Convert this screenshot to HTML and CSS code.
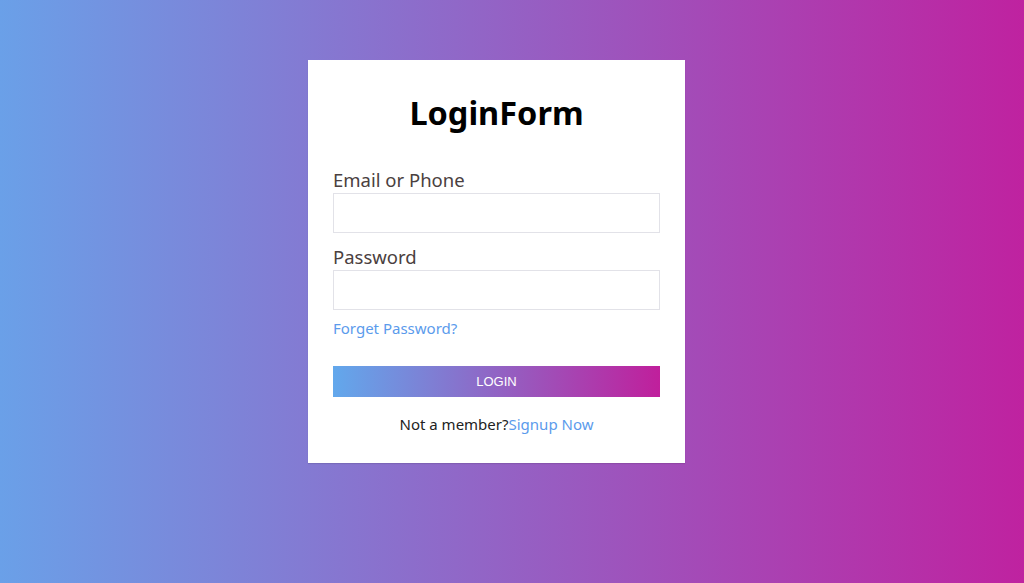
FILE: index.html
```html
<html>
<head>
    <title>Login Form</title>
    <link rel="stylesheet" href="styles.css">
</head>
<body>
    <div class="page">
        <div class="card">
            <h1>LoginForm</h1>
            <form>
                <label for="email">Email or Phone</label>
                <input type="text" id="email" name="email">
                <label for="password">Password</label>
                <input type="password" id="password" name="password">
                <a class="forgot" href="#">Forget Password?</a>
                <button type="submit">LOGIN</button>
            </form>
            <div class="signup">Not a member?<a href="#">Signup Now</a></div>
        </div>
    </div>
</body>
</html>
```
FILE: styles.css
```css
body {
    margin: 0;
    height: 583px;
    background: linear-gradient(to right, #6aa0e8, #bf22a0);
    font-family: "Noto Sans", sans-serif;
}

.page {
    padding-top: 60px;
    padding-left: 308px;
}

.card {
    width: 327px;
    background: white;
    padding: 26px 25px 29px;
    box-shadow: 0 1px 1px rgba(0, 0, 0, 0.1);
}

h1 {
    margin: 5px 0 33px;
    text-align: center;
    font-size: 32.5px;
    font-weight: 700;
    line-height: 44px;
    color: #000;
}

form {
    display: flex;
    flex-direction: column;
}

label {
    font-size: 18.5px;
    line-height: 24px;
    color: #4a4040;
    margin-bottom: 1px;
}

input + label {
    margin-top: 2px;
}

input {
    height: 40px;
    border: 1px solid #e2e2e8;
    padding: 0 10px;
    font-size: 16px;
    margin-bottom: 10px;
    box-sizing: border-box;
}

.forgot {
    font-size: 15px;
    line-height: 16px;
    color: #5b9bec;
    text-decoration: none;
    margin-bottom: 30px;
}

button {
    height: 31px;
    border: none;
    color: white;
    font-family: "Liberation Sans", Arial, sans-serif;
    font-size: 13px;
    background: linear-gradient(to right, #62a8ec, #c01f9c);
    cursor: pointer;
}

.signup {
    margin-top: 17px;
    text-align: center;
    font-size: 15px;
    line-height: 20px;
    color: #222;
}

.signup a {
    color: #5b9bec;
    text-decoration: none;
}
```
